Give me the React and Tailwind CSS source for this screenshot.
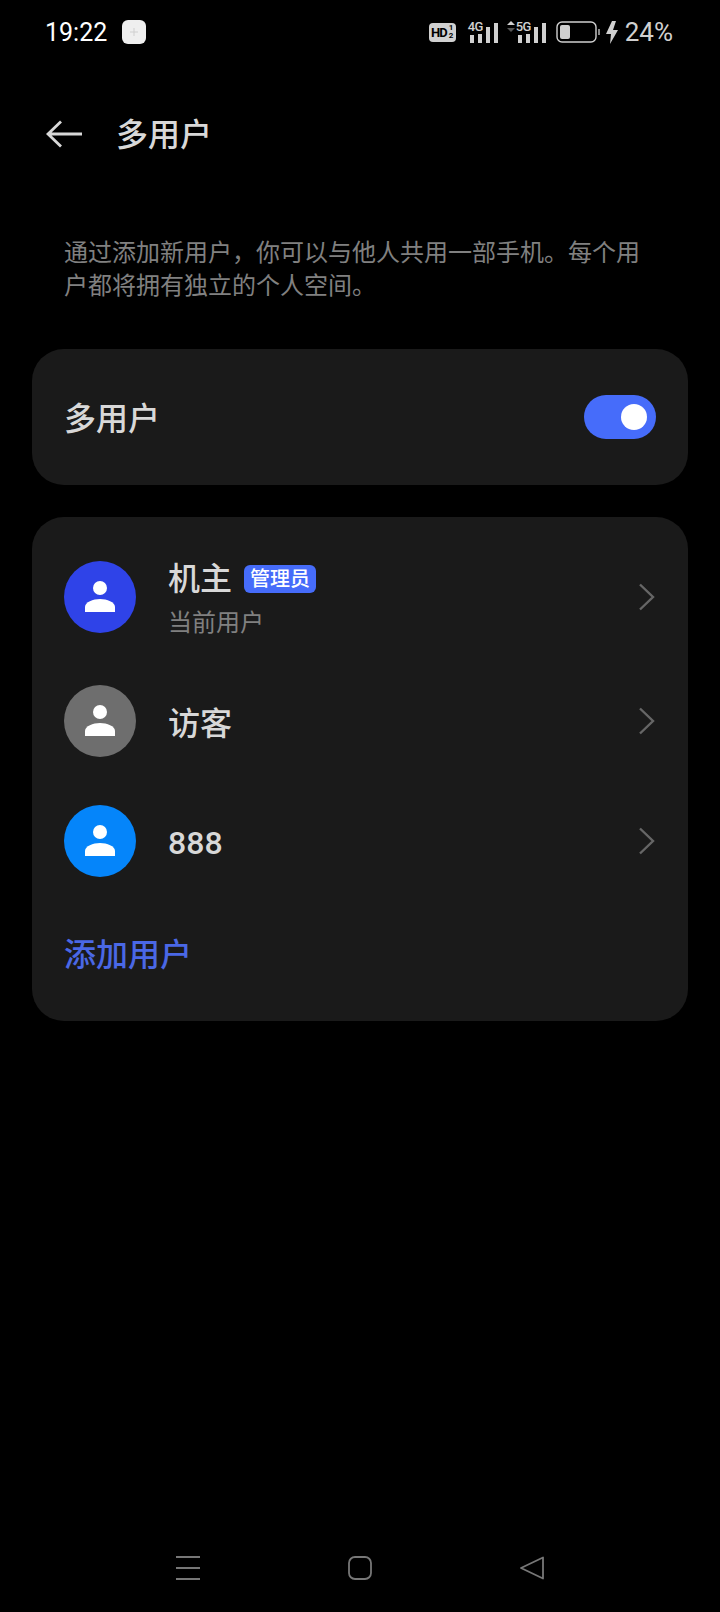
import React from "react";

const cjk = "font-['Roboto','Noto_Sans_CJK_SC',sans-serif]";

const Person = () => (
  <svg width="72" height="72" viewBox="0 0 72 72" fill="#fff">
    <circle cx="36" cy="27" r="7" />
    <path d="M21 51v-5c0-5 8-8 15-8s15 3 15 8v5z" />
  </svg>
);

const Chevron = () => (
  <svg width="18" height="28" viewBox="0 0 18 28" fill="none" stroke="#666" strokeWidth="2.4" className="shrink-0">
    <path d="M2 1.500 15 14 2 26.500" />
  </svg>
);

const Bars = () => (
  <svg width="29" height="22" viewBox="0 0 29 22" fill="#d0d0d0">
    <rect x="1" y="14" width="4" height="8" />
    <rect x="9" y="13" width="4" height="9" />
    <rect x="17" y="6" width="4" height="16" />
    <rect x="25" y="2" width="4" height="20" />
  </svg>
);

const Signal = ({ label, arrows }) => (
  <div className="relative w-[29px] h-[22px]">
    <Bars />
    <span className="absolute -top-[1px] -left-[1px] w-[16px] text-[13px] leading-[13px] font-medium tracking-[-0.5px] text-[#d0d0d0] font-['Roboto',sans-serif]">
      {label}
    </span>
    {arrows && (
      <svg width="8" height="11" viewBox="0 0 8 11" className="absolute top-[0px] -left-[10px]">
        <path d="M4 0 8 4H0z" fill="#d0d0d0" />
        <path d="M4 11 8 7H0z" fill="#555" />
      </svg>
    )}
  </div>
);

const StatusBar = () => (
  <div className="h-[64px] flex items-center justify-between pl-[45px] pr-[47px] font-['Roboto',sans-serif]">
    <div className="flex items-center gap-[15px]">
      <span className="text-[25px] leading-none text-white">19:22</span>
      <div className="w-[24px] h-[24px] rounded-[6px] bg-[#efefef] flex items-center justify-center">
        <svg width="8" height="8" viewBox="0 0 8 8" stroke="#cfcfcf" strokeWidth="1">
          <path d="M4 0v8M0 4h8" />
        </svg>
      </div>
    </div>
    <div className="flex items-center text-[#d0d0d0]">
      <div className="w-[27px] h-[19px] mr-[13px] rounded-[4px] bg-[#d0d0d0] flex items-center justify-center text-black font-bold leading-none">
        <span className="text-[13px] tracking-[-1px]">HD</span>
        <span className="ml-[2px] flex flex-col items-center text-[8px] leading-[8px]">
          <span>1</span>
          <span>2</span>
        </span>
      </div>
      <Signal label="4G" />
      <div className="w-[19px]" />
      <Signal label="5G" arrows />
      <svg width="44" height="22" viewBox="0 0 44 22" className="ml-[10px]" fill="none">
        <rect x="1" y="1" width="39" height="20" rx="5" stroke="#d0d0d0" strokeWidth="1.4" />
        <rect x="4" y="4" width="10" height="14" rx="2" fill="#d0d0d0" />
        <rect x="42" y="8" width="2" height="6" fill="#888" />
      </svg>
      <svg width="14" height="23" viewBox="0 0 14 23" fill="#d0d0d0" className="ml-[5px]">
        <path d="M7 0 1 13h5l-1 10 8-14H8l3-9z" />
      </svg>
      <span className="ml-[6px] text-[26px] leading-none">24%</span>
    </div>
  </div>
);

const UserRow = ({ color, top, children }) => (
  <div className="h-[72px] flex items-center px-[32px]" style={{ marginTop: top }}>
    <div className={`w-[72px] h-[72px] rounded-full shrink-0 ${color}`}>
      <Person />
    </div>
    <div className="flex-1 ml-[32px]">{children}</div>
    <Chevron />
  </div>
);

export default function App() {
  return (
    <div className={`w-[720px] h-[1612px] bg-black flex flex-col ${cjk}`}>
      <StatusBar />

      <div className="h-[140px] flex items-center pl-[46px]">
        <svg width="36" height="28" viewBox="0 0 36 28" fill="none" stroke="#d8d8d8" strokeWidth="2.8">
          <path d="M15 1.500 2 14l13 12.500M2 14h34" />
        </svg>
        <span className="ml-[34px] pt-[2px] text-[32px] leading-none font-medium text-[#d8d8d8]">多用户</span>
      </div>

      <p className="mt-[33px] px-[64px] text-[24px] leading-[33px] text-[#808080]">
        通过添加新用户，你可以与他人共用一部手机。每个用户都将拥有独立的个人空间。
      </p>

      <div className="mt-[46px] mx-[32px] h-[136px] rounded-[32px] bg-[#1a1a1a] flex items-center justify-between px-[32px]">
        <span className="pt-[4px] text-[32px] leading-none font-medium text-[#d8d8d8]">多用户</span>
        <div className="w-[72px] h-[44px] rounded-full bg-[#466cfa] flex items-center justify-end pr-[9px]">
          <div className="w-[26px] h-[26px] rounded-full bg-white" />
        </div>
      </div>

      <div className="mt-[32px] mx-[32px] h-[504px] rounded-[32px] bg-[#1a1a1a] pt-[44px]">
        <UserRow color="bg-[#2f43e8]" top={0}>
          <div className="mt-[6px] flex items-center h-[36px]">
            <span className="text-[32px] leading-none font-medium text-[#d8d8d8]">机主</span>
            <span className="ml-[12px] w-[72px] h-[28px] rounded-[6px] bg-[#466cfa] text-white text-[20px] font-medium leading-[28px] text-center">
              管理员
            </span>
          </div>
          <div className="mt-[10px] text-[24px] leading-[32px] text-[#808080]">当前用户</div>
        </UserRow>
        <UserRow color="bg-[#6e6e6e]" top={52}>
          <div className="pt-[5px] text-[32px] leading-none font-medium text-[#d8d8d8]">访客</div>
        </UserRow>
        <UserRow color="bg-[#0585fa]" top={48}>
          <div className="pt-[3px] text-[32px] leading-none font-medium text-[#d8d8d8]">888</div>
        </UserRow>
        <div className="mt-[56px] pl-[32px] h-[44px] flex items-center text-[32px] leading-none font-medium text-[#4a68e6]">
          添加用户
        </div>
      </div>

      <div className="mt-auto mb-[32px] h-[24px] flex items-center justify-center gap-[148px]">
        <svg width="24" height="24" viewBox="0 0 24 24" stroke="#777" strokeWidth="1.8">
          <path d="M0 1h24M0 12h24M0 23h24" />
        </svg>
        <svg width="24" height="24" viewBox="0 0 24 24" fill="none" stroke="#777" strokeWidth="1.8">
          <rect x="1" y="1" width="22" height="22" rx="6" />
        </svg>
        <svg width="24" height="24" viewBox="0 0 24 24" fill="none" stroke="#777" strokeWidth="1.8" strokeLinejoin="round">
          <path d="M23 1.500v21L1 12z" />
        </svg>
      </div>
    </div>
  );
}
